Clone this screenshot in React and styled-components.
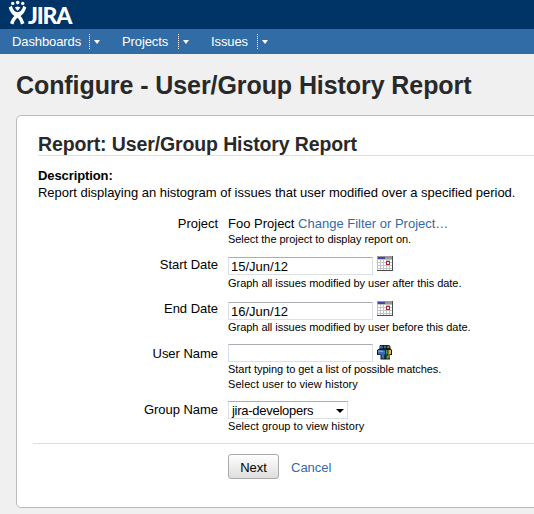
import React from "react";
import styled, { createGlobalStyle } from "styled-components";

const menus = [
  { label: "Dashboards", width: 69 },
  { label: "Projects", width: 48 },
  { label: "Issues", width: 38 },
];

function Logo() {
  return (
    <LogoLink>
      <svg width="20" height="26" viewBox="0 0 20 26" fill="#fff">
        <circle cx="4.7" cy="3.4" r="1.7" />
        <circle cx="9.7" cy="2.6" r="1.8" />
        <circle cx="14.7" cy="3.4" r="1.7" />
        <path d="M0.7 7.4 L3.8 5.8 C5 9.8 6.8 12.2 9.6 12.2 C12.4 12.2 14.2 9.8 15.4 5.8 L18.3 7.4 C17 11.5 15.2 14.2 12.6 16 C14.2 18 15.5 20.5 16.4 23.3 L12.9 24.5 C12.3 21.5 11.3 19.2 9.5 17.8 C7.5 19.2 6.2 21.5 5.5 24.5 L2 23.3 C3 20.5 4.3 18 6.4 16 C3.8 14 1.8 11.5 0.7 7.4 Z" />
        <path d="M6.8 7.6 L9.6 6.4 L12.4 7.6 L9.6 10.9 Z" />
      </svg>
      <LogoText>JIRA</LogoText>
    </LogoLink>
  );
}

function CalendarIcon() {
  return (
    <CalendarSvg
      width="16"
      height="15"
      viewBox="0 0 16 15"
      shapeRendering="crispEdges"
    >
      <rect width="16" height="15" fill="#c4c4c8" />
      <rect width="16" height="3" fill="#999" />
      <rect x="1" y="1" width="7" height="2" fill="#4043b0" />
      <path
        d="M1 4h2v2H1zM4 4h2v2H4zM7 4h2v2H7zM13 4h2v2h-2zM1 7h2v2H1zM4 7h2v2H4zM7 7h2v2H7zM13 7h2v2h-2zM1 10h2v2H1zM4 10h2v2H4zM7 10h2v2H7zM10 10h2v2h-2zM13 10h2v2h-2zM1 13h2v1H1zM4 13h2v1H4zM7 13h2v1H7zM10 13h2v1h-2zM13 13h2v1h-2z"
        fill="#fff"
      />
      <rect x="9.5" y="5.5" width="3" height="3" fill="#fff" stroke="#a82a2a" />
      <path d="M15 0h1v15H0v-1h15z" fill="#4b4b4b" />
    </CalendarSvg>
  );
}

function UsersIcon() {
  return (
    <svg width="16" height="16" viewBox="0 0 16 16">
      <path
        d="M3 1h9l1.5 1.5v2L15 6v5h-2v4.5H3.5V11H0V6l2.5-1.5v-2z"
        fill="#101722"
      />
      <path d="M11.5 6H14v4h-1.5v4.5h-1z" fill="#efb42c" />
      <path d="M8.7 6h2v4.5h-2z" fill="#17a042" />
      <path d="M9.5 11.5h1.7v3H9.5z" fill="#28b850" />
      <path d="M1 6.3h7v4.2H7.3v4H4.5v-4H1z" fill="#3b69b8" />
      <path d="M1.3 6.5h5v1.6h-5z" fill="#79a5e5" />
      <circle cx="4.3" cy="3" r="1.6" fill="#3a68b4" />
      <circle cx="8" cy="3" r="1.3" fill="#2b7a62" />
      <circle cx="11.4" cy="3" r="1.2" fill="#8d8640" />
    </svg>
  );
}

function App() {
  return (
    <Page>
      <GlobalStyle />
      <Header>
        <Logo />
      </Header>
      <Nav>
        {menus.map((menu) => (
          <Menu key={menu.label}>
            <MenuLabel $width={menu.width}>{menu.label}</MenuLabel>
            <MenuArrow />
          </Menu>
        ))}
      </Nav>
      <Title>Configure - User/Group History Report</Title>
      <Card>
        <ReportTitle>Report: User/Group History Report</ReportTitle>
        <Description>
          <strong>Description:</strong>
          <p>
            Report displaying an histogram of issues that user modified over a
            specified period.
          </p>
        </Description>

        <Row $height={41}>
          <Label>Project</Label>
          <Field>
            <Value>
              Foo Project <Link href="#">Change Filter or Project…</Link>
            </Value>
            <Hint>Select the project to display report on.</Hint>
          </Field>
        </Row>
        <Row $height={45}>
          <Label>Start Date</Label>
          <Field>
            <Control $height={19}>
              <Input defaultValue="15/Jun/12" />
              <CalendarIcon />
            </Control>
            <Hint>Graph all issues modified by user after this date.</Hint>
          </Field>
        </Row>
        <Row $height={42}>
          <Label $lineHeight={14}>End Date</Label>
          <Field>
            <Control>
              <Input defaultValue="16/Jun/12" />
              <CalendarIcon />
            </Control>
            <Hint>Graph all issues modified by user before this date.</Hint>
          </Field>
        </Row>
        <Row $height={57}>
          <Label $lineHeight={19}>User Name</Label>
          <Field>
            <Control>
              <Input />
              <UsersIcon />
            </Control>
            <Hint>Start typing to get a list of possible matches.</Hint>
            <Hint $spacing={0.08}>Select user to view history</Hint>
          </Field>
        </Row>
        <Row $height={42}>
          <Label $lineHeight={18}>Group Name</Label>
          <Field>
            <Control>
              <Select>
                jira-developers
                <SelectArrow />
              </Select>
            </Control>
            <Hint $spacing={0.06}>Select group to view history</Hint>
          </Field>
        </Row>

        <Actions>
          <Button>Next</Button>
          <Link href="#">Cancel</Link>
        </Actions>
      </Card>
    </Page>
  );
}

const GlobalStyle = createGlobalStyle`
  * {
    box-sizing: border-box;
  }

  body {
    margin: 0;
    overflow: hidden;
    background: #f0f0f0;
    color: #000;
    font-family: "Liberation Sans", Arial, sans-serif;
    font-size: 13px;
  }

  h1,
  h2,
  p {
    margin: 0;
  }

  p {
    letter-spacing: -0.02px;
  }
`;

const Page = styled.div`
  width: 534px;
  height: 514px;
  overflow: hidden;
`;

const Header = styled.header`
  height: 29px;
  padding-left: 8px;
  background: #003366;
`;

const LogoLink = styled.div`
  display: flex;
`;

const LogoText = styled.span`
  color: #fff;
  font-family: Lato, sans-serif;
  font-size: 23px;
  font-weight: 900;
  line-height: 30px;
  letter-spacing: -1.2px;
`;

const Nav = styled.nav`
  display: flex;
  gap: 20px;
  height: 25px;
  padding-left: 12px;
  background: #326ca6;
`;

const Menu = styled.div`
  display: flex;
  align-items: center;
`;

const MenuLabel = styled.span`
  width: ${(props) => props.$width}px;
  margin-right: 8px;
  color: #fff;
  line-height: 27px;
  letter-spacing: -0.1px;
  white-space: nowrap;
`;

const MenuArrow = styled.span`
  display: flex;
  align-items: center;
  width: 13px;
  height: 15px;
  padding-left: 4px;
  border-left: 1px dotted #fff;

  &::after {
    content: "";
    border: solid transparent;
    border-width: 4px 3.5px 0;
    border-top-color: #fff;
  }
`;

const Title = styled.h1`
  height: 61px;
  padding-left: 16px;
  color: #292929;
  font-size: 25px;
  line-height: 62px;
  letter-spacing: -0.08px;
  white-space: nowrap;
`;

const Card = styled.main`
  width: 540px;
  height: 393px;
  margin-left: 16px;
  padding: 17px 0 0 16px;
  border: 1px solid #bbb;
  border-radius: 5px;
  background: #fff;
`;

const ReportTitle = styled.h2`
  height: 23px;
  margin-left: 5px;
  border-bottom: 1px solid #ddd;
  color: #292929;
  font-size: 19.5px;
  line-height: 23px;
  letter-spacing: -0.12px;
  white-space: nowrap;
`;

const Description = styled.div`
  height: 60px;
  padding: 11px 0 0 5px;
  line-height: 17px;
  white-space: nowrap;

  strong {
    letter-spacing: -0.1px;
  }
`;

const Row = styled.div`
  display: grid;
  grid-template-columns: 185px 1fr;
  column-gap: 10px;
  height: ${(props) => props.$height}px;
`;

const Label = styled.label`
  line-height: ${(props) => props.$lineHeight || 16}px;
  letter-spacing: -0.03px;
  text-align: right;
`;

const Field = styled.div`
  white-space: nowrap;
`;

const Value = styled.div`
  line-height: 16px;
`;

const Control = styled.div`
  display: flex;
  align-items: flex-start;
  gap: 4px;
  height: ${(props) => props.$height || 18}px;
`;

const CalendarSvg = styled.svg`
  margin-top: -1px;
`;

const Input = styled.input`
  width: 145px;
  height: 18px;
  padding: 1px 2px 0;
  border: 1px solid #dbdfe6;
  border-top-color: #abadb3;
  border-radius: 1px;
  font: inherit;
`;

const Hint = styled.div`
  font-size: 11px;
  line-height: 15px;
  letter-spacing: ${(props) => props.$spacing || -0.04}px;
`;

const Select = styled.div`
  display: flex;
  justify-content: space-between;
  align-items: center;
  width: 120px;
  height: 18px;
  padding: 1px 3px 0;
  border: 1px solid #dbdfe6;
  border-top-color: #abadb3;
  letter-spacing: -0.27px;
`;

const SelectArrow = styled.span`
  border: solid transparent;
  border-width: 4px 4px 0;
  border-top-color: #000;
`;

const Link = styled.a`
  color: #326ca6;
  text-decoration: none;
`;

const Actions = styled.div`
  display: flex;
  align-items: center;
  gap: 12px;
  height: 48px;
  padding-left: 195px;
  border-top: 1px solid #ddd;
`;

const Button = styled.button`
  width: 51px;
  height: 25px;
  margin-top: -2px;
  padding: 2px 0 0;
  border: 1px solid #aaa;
  border-radius: 3px;
  background: linear-gradient(#fff, #ddd);
  color: #000;
  font: inherit;
`;

export default App;
